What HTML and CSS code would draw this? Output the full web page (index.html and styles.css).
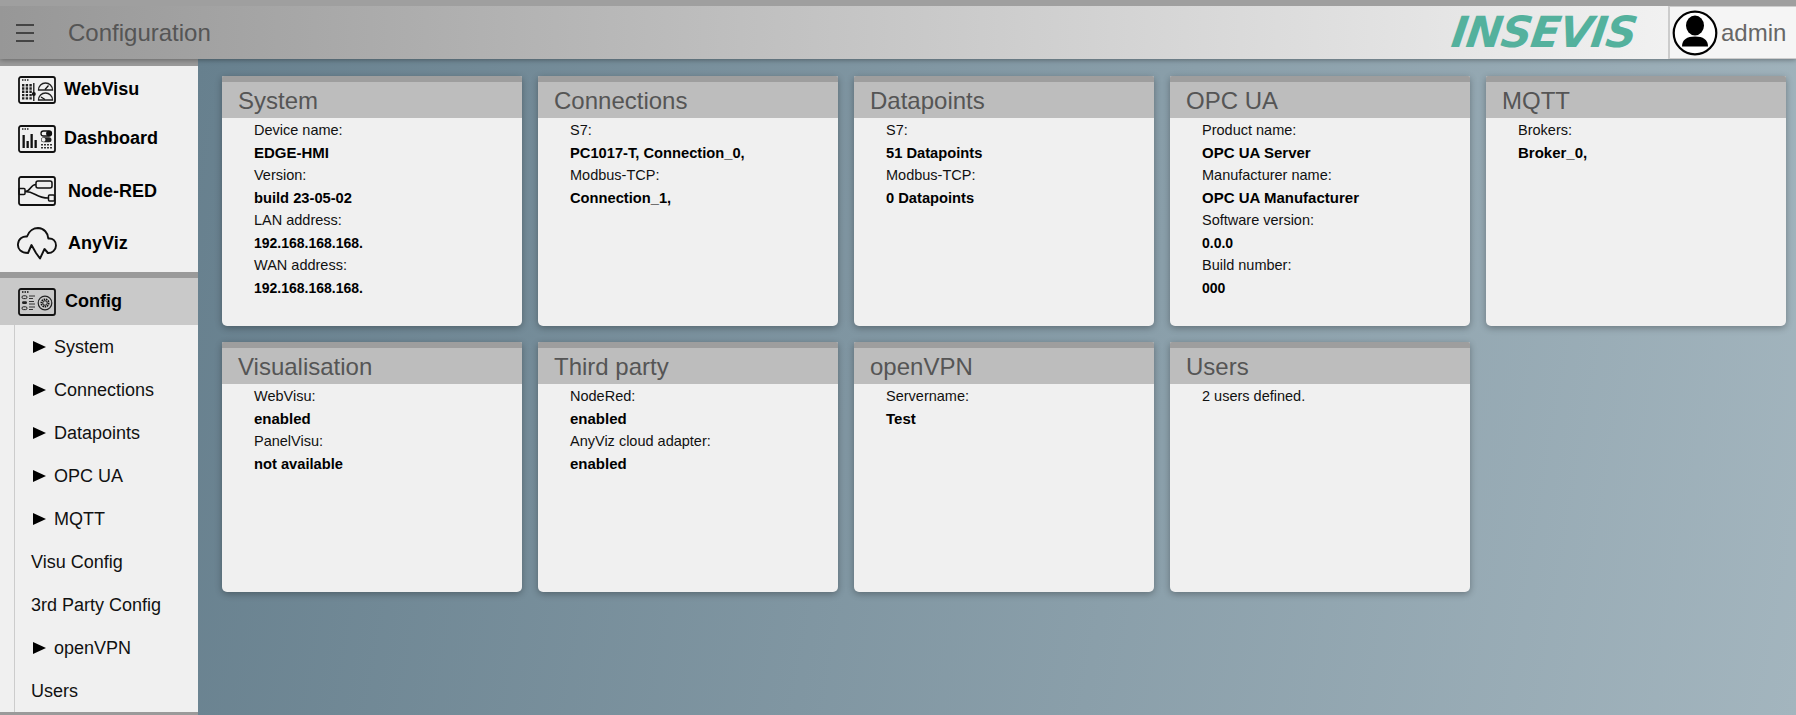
FILE: index.html
```html
<!DOCTYPE html>
<html lang="en">
<head>
<meta charset="utf-8">
<title>Configuration</title>
<link rel="stylesheet" href="styles.css">
</head>
<body>
<header class="topbar">
  <div class="burger"><span></span><span></span><span></span></div>
  <div class="page-title">Configuration</div>
  <div class="logo">INSEVIS</div>
  <div class="user">
    <svg class="user-icon" viewBox="0 0 46 46" aria-hidden="true">
      <circle cx="23" cy="23" r="21.300" fill="#fff" stroke="#000" stroke-width="2.200"/>
      <ellipse cx="23" cy="15.500" rx="9" ry="10" fill="#000"/>
      <path d="M10 36.500c0-7 5-10 13-10s13 3 13 10z" fill="#000"/>
    </svg>
    <span class="user-name">admin</span>
  </div>
</header>
<div class="layout">
  <nav class="sidebar">
    <div class="nav-group">
      <a class="nav-main h-web">
        <svg class="ico" viewBox="0 0 38 28"><rect x="1" y="1" width="36" height="26" rx="2" fill="none" stroke="#111" stroke-width="1.800"/><path d="M4 4h1.500M6.500 4H8M9 4h1.500" stroke="#222" stroke-width="1.500"/><path d="M4 8h2.400v2.400H4zM7.700 8h2.400v2.400H7.700zM11.400 8h2.400v2.400h-2.400zM4 11.300h2.400v2.400H4zM7.700 11.300h2.400v2.400H7.700zM11.400 11.300h2.400v2.400h-2.400zM4 14.600h2.400V17H4zM7.700 14.600h2.400V17H7.700zM11.400 14.600h2.400V17h-2.400zM4 17.900h2.400v2.400H4zM7.700 17.900h2.400v2.400H7.700zM11.400 17.900h2.400v2.400h-2.400zM4 21.200h2.400v2.400H4zM7.700 21.200h2.400v2.400H7.700zM11.400 21.200h2.400v2.400h-2.400z" fill="#222"/><path d="M15.800 7v18" stroke="#111" stroke-width="1.300"/><circle cx="15.800" cy="18" r="2" fill="#111"/><path d="M20.500 14a7 7 0 0 1 14 0zM20.500 24a7 7 0 0 1 14 0z" fill="none" stroke="#222" stroke-width="1.300"/><path d="M27 13.500l3.500-4M27 23.500l-4-2.500" stroke="#111" stroke-width="1.300"/></svg>
        <span>WebVisu</span>
      </a>
      <a class="nav-main h-dash">
        <svg class="ico" viewBox="0 0 38 28"><rect x="1" y="1" width="36" height="26" rx="2" fill="none" stroke="#111" stroke-width="1.800"/><path d="M4 4h1.500M6.500 4H8M9 4h1.500" stroke="#222" stroke-width="1.500"/><path d="M4.500 10h2.300v13H4.500zM8.500 16h2.300v7H8.500zM12.500 9h2.300v14h-2.300zM16.500 15h2.300v8h-2.300z" fill="#111"/><rect x="23" y="6" width="10.500" height="5" rx="2.500" fill="none" stroke="#111" stroke-width="1.300"/><circle cx="30.800" cy="8.500" r="2.700" fill="#111"/><rect x="23" y="12.200" width="10.500" height="5" rx="2.500" fill="#222"/><circle cx="25.500" cy="14.700" r="2" fill="#eee"/><path d="M23 19h2v1.500h-2zM26 19h2v1.500h-2zM29 19h2v1.500h-2zM32 19h2v1.500h-2zM23 22h2v1.500h-2zM26 22h2v1.500h-2zM29 22h2v1.500h-2zM32 22h2v1.500h-2z" fill="#333"/></svg>
        <span>Dashboard</span>
      </a>
      <a class="nav-main h-node">
        <svg class="ico ico-node" viewBox="0 0 38 30"><rect x="1" y="1" width="36" height="28" rx="2" fill="none" stroke="#111" stroke-width="1.800"/><rect x="18" y="5" width="16" height="7" rx="2" fill="none" stroke="#111" stroke-width="1.500"/><rect x="1" y="12.500" width="6" height="6" rx="1" fill="none" stroke="#111" stroke-width="1.500"/><rect x="30.500" y="19" width="6" height="6" rx="1" fill="none" stroke="#111" stroke-width="1.500"/><path d="M7 15.500c6 0 5-7 11-7M7 15.500c11 0 10 6.500 23.500 6.500" fill="none" stroke="#111" stroke-width="1.500"/></svg>
        <span class="shift-node">Node-RED</span>
      </a>
      <a class="nav-main h-any">
        <svg class="ico ico-cloud" viewBox="0 0 40 33"><path d="M11 26C4 26 .5 22 1 17 1.500 11.500 6 9 10 9.500 12 3.500 17 1 21 1c6 .2 10 5 10.300 10.500C36 11 39 14 39 18.500c0 4.500-4 8-8.500 7.500M11 26l3.500-8 4.500 8 4 5.500 4.500-9.500 3.500 4" fill="none" stroke="#111" stroke-width="1.900" stroke-linejoin="round" stroke-linecap="round"/></svg>
        <span class="shift-any">AnyViz</span>
      </a>
    </div>
    <div class="nav-group nav-config">
      <a class="nav-main h-conf active">
        <svg class="ico" viewBox="0 0 38 28"><rect x="1" y="1" width="36" height="26" rx="2" fill="none" stroke="#111" stroke-width="1.800"/><path d="M4 4h1.500M6.500 4H8M9 4h1.500" stroke="#111" stroke-width="1.500"/><rect x="4" y="7.800" width="5" height="2.800" rx="1.400" fill="none" stroke="#222"/><rect x="4" y="13.300" width="5" height="2.800" rx="1.400" fill="#222"/><rect x="4" y="18.800" width="5" height="2.800" rx="1.400" fill="none" stroke="#222"/><path d="M11 8h6M11 10.500h4M11 13.500h5M11 16h6M11 19h6M11 21.500h4" stroke="#333"/><circle cx="27" cy="15" r="6.800" fill="none" stroke="#222" stroke-width="1.200"/><circle cx="27" cy="15" r="3.800" fill="none" stroke="#111" stroke-width="1.500" stroke-dasharray="1.500 .8"/><circle cx="27" cy="15" r="2.300" fill="none" stroke="#111"/></svg>
        <span class="shift-conf">Config</span>
      </a>
      <ul class="subnav">
        <li class="arrow">System</li>
        <li class="arrow">Connections</li>
        <li class="arrow">Datapoints</li>
        <li class="arrow">OPC UA</li>
        <li class="arrow">MQTT</li>
        <li>Visu Config</li>
        <li>3rd Party Config</li>
        <li class="arrow">openVPN</li>
        <li>Users</li>
      </ul>
    </div>
  </nav>
  <main class="content">
    <section class="card">
      <h2>System</h2>
      <div class="card-body">
        <p>Device name:</p><p class="v">EDGE-HMI</p>
        <p>Version:</p><p class="v mid">build 23-05-02</p>
        <p>LAN address:</p><p class="v num">192.168.168.168.</p>
        <p>WAN address:</p><p class="v num">192.168.168.168.</p>
      </div>
    </section>
    <section class="card">
      <h2>Connections</h2>
      <div class="card-body">
        <p>S7:</p><p class="v mid">PC1017-T, Connection_0,</p>
        <p>Modbus-TCP:</p><p class="v mid">Connection_1,</p>
      </div>
    </section>
    <section class="card">
      <h2>Datapoints</h2>
      <div class="card-body">
        <p>S7:</p><p class="v mid">51 Datapoints</p>
        <p>Modbus-TCP:</p><p class="v mid">0 Datapoints</p>
      </div>
    </section>
    <section class="card">
      <h2>OPC UA</h2>
      <div class="card-body">
        <p>Product name:</p><p class="v">OPC UA Server</p>
        <p>Manufacturer name:</p><p class="v">OPC UA Manufacturer</p>
        <p>Software version:</p><p class="v num">0.0.0</p>
        <p>Build number:</p><p class="v num">000</p>
      </div>
    </section>
    <section class="card">
      <h2>MQTT</h2>
      <div class="card-body">
        <p>Brokers:</p><p class="v">Broker_0,</p>
      </div>
    </section>
    <section class="card">
      <h2>Visualisation</h2>
      <div class="card-body">
        <p>WebVisu:</p><p class="v">enabled</p>
        <p>PanelVisu:</p><p class="v mid">not available</p>
      </div>
    </section>
    <section class="card">
      <h2>Third party</h2>
      <div class="card-body">
        <p>NodeRed:</p><p class="v">enabled</p>
        <p>AnyViz cloud adapter:</p><p class="v">enabled</p>
      </div>
    </section>
    <section class="card">
      <h2>openVPN</h2>
      <div class="card-body">
        <p>Servername:</p><p class="v">Test</p>
      </div>
    </section>
    <section class="card">
      <h2>Users</h2>
      <div class="card-body">
        <p>2 users defined.</p>
      </div>
    </section>
  </main>
</div>
</body>
</html>
```
FILE: styles.css
```css
* { box-sizing: border-box; }
html, body { margin: 0; height: 100%; }
body {
  display: flex;
  flex-direction: column;
  overflow: hidden;
  font-family: "Liberation Sans", Arial, sans-serif;
  color: #000;
  background: #6a8391;
}
.topbar {
  position: relative;
  z-index: 2;
  flex: 0 0 59px;
  display: flex;
  align-items: center;
  border-top: 6px solid #9f9f9f;
  background: linear-gradient(to right, #979797, #f8f8f8);
  box-shadow: 0 1px 5px rgba(0, 0, 0, .35);
}
.burger {
  display: flex;
  flex-direction: column;
  gap: 6px;
  width: 18px;
  margin-left: 16px;
}
.burger span { display: block; height: 2px; background: #444; }
.page-title {
  margin-left: 34px;
  font-size: 24px;
  color: #555;
  flex: 1;
}
.logo {
  font-family: "DejaVu Sans", sans-serif;
  font-size: 43px;
  line-height: 1;
  font-weight: 700;
  font-style: italic;
  letter-spacing: -1.200px;
  color: #54b19d;
  margin-right: 32px;
  transform: skewX(-8deg);
}
.user {
  align-self: stretch;
  width: 128px;
  display: flex;
  align-items: center;
  gap: 3px;
  padding-left: 2px;
  background: #f5f5f5;
  border: 1px solid #ccc;
  border-left-width: 2px;
  border-right: 0;
}
.user-icon { width: 46px; height: 46px; }
.user-name { font-size: 24px; color: #666; }
.layout { flex: 1; display: flex; min-height: 0; }
.sidebar {
  flex: 0 0 198px;
  display: flex;
  flex-direction: column;
  background: #f0f0f0;
  border-bottom: 3px solid #9a9a9a;
}
.nav-group { border-top: 7px solid #9a9a9a; }
.nav-config { border-top-width: 6px; flex: 1; display: flex; flex-direction: column; }
.nav-main {
  display: flex;
  align-items: center;
  gap: 8px;
  padding-left: 18px;
  font-size: 18px;
  font-weight: 700;
}
.h-web { height: 47px; padding-top: 1px; }
.h-dash { height: 51px; padding-top: 1px; }
.h-node { height: 54px; }
.h-any { height: 54px; padding: 0 0 4px 17px; }
.h-conf { height: 47px; }
.h-web span { position: relative; top: -1px; }
.h-dash span { position: relative; top: -1px; }
.shift-node { margin-left: 4px; }
.shift-any { margin-left: 3px; }
.shift-conf { margin-left: 1px; }
.active { background: #c9c9c9; }
.ico { width: 38px; height: 28px; flex: none; }
.ico-node { height: 30px; }
.ico-cloud { width: 40px; height: 33px; }
.subnav {
  flex: 1;
  list-style: none;
  margin: 0 0 0 14px;
  padding: 0 0 0 16px;
  border-left: 1px solid #ccc;
  font-size: 18px;
}
.subnav li { height: 43px; line-height: 44px; color: #111; white-space: nowrap; }
.subnav li.arrow { position: relative; padding-left: 23px; }
.subnav li.arrow::before {
  content: "";
  position: absolute;
  left: 2px;
  top: 16px;
  border-left: 13px solid #000;
  border-top: 6px solid transparent;
  border-bottom: 6px solid transparent;
}
.content {
  flex: 1;
  display: grid;
  grid-template-columns: repeat(5, 300px);
  grid-auto-rows: 250px;
  gap: 16px;
  align-content: start;
  padding: 17px 0 0 24px;
  background: linear-gradient(100deg, #67808e, #a3b5be);
}
.card {
  background: #f0f0f0;
  border-radius: 2px 2px 5px 5px;
  box-shadow: 0 2px 7px rgba(0, 0, 0, .3);
  overflow: hidden;
}
.card h2 {
  margin: 0;
  height: 42px;
  border-top: 6px solid #9e9e9e;
  background: #bdbdbd;
  padding-left: 16px;
  font-size: 24px;
  font-weight: 400;
  line-height: 38px;
  color: #555;
}
.card-body { padding: 1px 0 0 32px; }
.card-body p {
  margin: 0;
  height: 22.500px;
  line-height: 22.500px;
  font-size: 14.500px;
  color: #111;
}
.card-body p.v { font-size: 15px; font-weight: 700; color: #000; }
.card-body p.mid { font-size: 14.700px; }
.card-body p.num { font-size: 14px; }
```
